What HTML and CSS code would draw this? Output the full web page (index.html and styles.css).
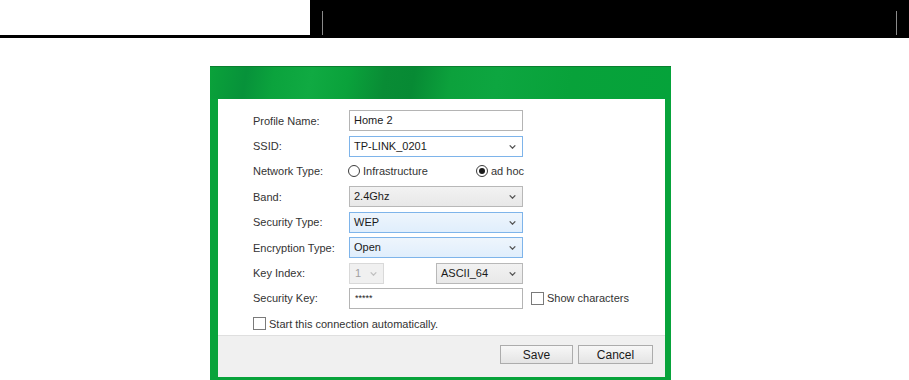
FILE: index.html
```html
<!DOCTYPE html>
<html lang="en">
<head>
    <meta charset="UTF-8">
    <title>Wireless Profile</title>
    <link rel="stylesheet" href="styles.css">
</head>
<body class="body">
    <div class="topbar">
        <div class="topbar-left"></div>
        <div class="topbar-right">
            <div class="topbar-lines"></div>
        </div>
    </div>

    <div class="dialog">
        <div class="dialog-head"></div>
        <div class="dialog-body">
            <div class="form">
                <div class="row">
                    <span class="label">Profile Name:</span>
                    <div class="field">Home 2</div>
                </div>
                <div class="row">
                    <span class="label">SSID:</span>
                    <div class="field combo focus">TP-LINK_0201<svg class="chev" viewBox="0 0 8 5"><polyline points="0.5,0.5 4,4 7.5,0.5"/></svg></div>
                </div>
                <div class="row">
                    <span class="label">Network Type:</span>
                    <div class="radios">
                        <span class="opt"><i class="radio"></i>Infrastructure</span>
                        <span class="opt"><i class="radio on"></i>ad hoc</span>
                    </div>
                </div>
                <div class="row">
                    <span class="label">Band:</span>
                    <div class="field select">2.4Ghz<svg class="chev" viewBox="0 0 8 5"><polyline points="0.5,0.5 4,4 7.5,0.5"/></svg></div>
                </div>
                <div class="row">
                    <span class="label">Security Type:</span>
                    <div class="field select hot">WEP<svg class="chev" viewBox="0 0 8 5"><polyline points="0.5,0.5 4,4 7.5,0.5"/></svg></div>
                </div>
                <div class="row">
                    <span class="label">Encryption Type:</span>
                    <div class="field select hot">Open<svg class="chev" viewBox="0 0 8 5"><polyline points="0.5,0.5 4,4 7.5,0.5"/></svg></div>
                </div>
                <div class="row">
                    <span class="label">Key Index:</span>
                    <div class="field select off small">1<svg class="chev" viewBox="0 0 8 5"><polyline points="0.5,0.5 4,4 7.5,0.5"/></svg></div>
                    <div class="field select mid">ASCII_64<svg class="chev" viewBox="0 0 8 5"><polyline points="0.5,0.5 4,4 7.5,0.5"/></svg></div>
                </div>
                <div class="row">
                    <span class="label">Security Key:</span>
                    <div class="field key">*****</div>
                    <span class="check"><i class="box"></i>Show characters</span>
                </div>
                <div class="row">
                    <span class="check"><i class="box"></i>Start this connection automatically.</span>
                </div>
            </div>
            <div class="footer">
                <button class="btn save">Save</button>
                <button class="btn cancel">Cancel</button>
            </div>
        </div>
    </div>
</body>
</html>
```

FILE: styles.css
```css
html,
.body {
    margin: 0;
    padding: 0;
    width: 909px;
    height: 380px;
    overflow: hidden;
    background-color: #ffffff;
    font-family: "Liberation Sans", Arial, sans-serif;
    font-size: 11px;
    color: #333333;
}

.topbar {
    display: flex;
    height: 38px;
}

.topbar-left {
    width: 310px;
    height: 35px;
    border-bottom: 3px solid #000000;
    background-color: #ffffff;
}

.topbar-right {
    flex: 1;
    background-color: #000000;
    padding: 11px 12px 0 12px;
}

.topbar-lines {
    height: 24px;
    border-left: 1px solid #8a8a8a;
    border-right: 1px solid #8a8a8a;
}

.dialog {
    margin: 28px 0 0 210px;
    width: 461px;
    background-color: #08a33b;
}

.dialog-head {
    height: 33px;
    border-top: 1px solid #0a7f2f;
    box-sizing: border-box;
    background: linear-gradient(100deg,
        #0aa23a 0%,
        #07923a 8%,
        #0ba33d 14%,
        #10aa42 22%,
        #0aa23b 30%,
        #098c35 38%,
        #078a34 44%,
        #0ca13c 52%,
        #0da640 62%,
        #08a23a 78%,
        #05a33a 100%);
}

.dialog-body {
    margin: 0 6px 0 8px;
    padding-bottom: 3px;
    background-color: #08a33b;
}

.form {
    background-color: #ffffff;
    padding: 9px 0 0 35px;
    height: 227px;
}

.row {
    display: flex;
    align-items: center;
    height: 25.4px;
}

.label {
    width: 96px;
    flex-shrink: 0;
}

.field {
    position: relative;
    box-sizing: border-box;
    width: 174px;
    height: 21px;
    line-height: 19px;
    padding-left: 4px;
    border: 1px solid #b4b4b4;
    background-color: #ffffff;
    color: #1a1a1a;
}

.field.focus {
    border-color: #7eb4ea;
}

.field.select {
    background: linear-gradient(#f2f2f2, #e8e8e8);
    border-color: #b8b8b8;
}

.field.select.hot {
    background: linear-gradient(#eef5fc, #e0eefc);
    border-color: #7eb4ea;
}

.field.select.off {
    background: #f0f0f0;
    border-color: #d9d9d9;
    color: #a0a0a0;
}

.field.small {
    width: 35px;
    padding-left: 5px;
}

.field.mid {
    width: 87px;
    margin-left: 52px;
}

.field.key {
    font-size: 9px;
    padding-left: 5px;
}

.chev {
    position: absolute;
    right: 6px;
    top: 8px;
    width: 7px;
    height: 4px;
    fill: none;
    stroke: #555555;
    stroke-width: 1.6;
}

.off .chev {
    stroke: #c0c0c0;
}

.radios {
    display: flex;
    justify-content: space-between;
    width: 176px;
    margin-left: -1px;
}

.opt {
    display: flex;
    align-items: center;
}

.radio {
    width: 10px;
    height: 10px;
    border: 1px solid #3c3c3c;
    border-radius: 50%;
    margin-right: 3px;
    position: relative;
    background-color: #ffffff;
}

.radio.on::after {
    content: "";
    position: absolute;
    left: 2px;
    top: 2px;
    width: 6px;
    height: 6px;
    border-radius: 50%;
    background-color: #1a1a1a;
}

.check {
    display: flex;
    align-items: center;
    margin-left: 8px;
}

.row:last-child .check {
    margin-left: 0;
}

.box {
    width: 11px;
    height: 11px;
    border: 1px solid #7a7a7a;
    margin-right: 3px;
    background-color: #ffffff;
}

.footer {
    display: flex;
    justify-content: flex-end;
    gap: 5px;
    height: 42px;
    padding: 9px 12px 0 0;
    box-sizing: border-box;
    background-color: #f0f0f0;
    border-top: 1px solid #dfdfdf;
}

.btn {
    height: 19px;
    padding: 0;
    border: 1px solid #acacac;
    background: linear-gradient(#f7f7f7, #e4e4e4);
    font-family: "Liberation Sans", Arial, sans-serif;
    font-size: 12px;
    color: #1a1a1a;
}

.btn.save {
    width: 73px;
}

.btn.cancel {
    width: 75px;
}
```
